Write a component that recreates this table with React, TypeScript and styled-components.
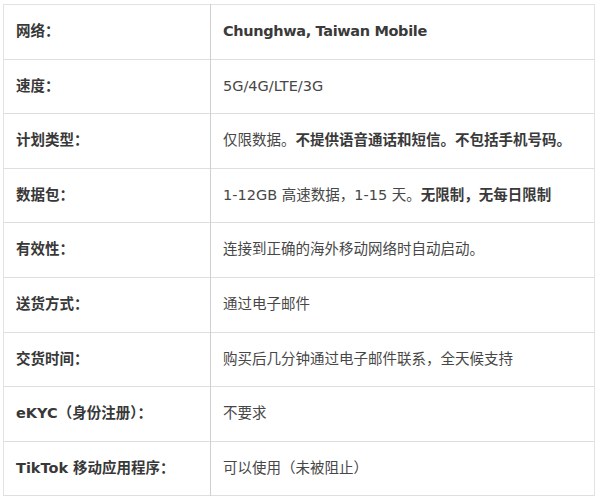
import React from "react";
import styled, { createGlobalStyle } from "styled-components";

const Global = createGlobalStyle`
  html, body { margin: 0; padding: 0; background: #fff; }
  body { font-family: "DejaVu Sans", "Noto Sans CJK SC", sans-serif; }
`;

const Wrap = styled.div`
  padding: 4px 5px 0 3px;
`;

const Table = styled.table`
  width: 592px;
  border-collapse: collapse;
  border: 1px solid #e2e2e2;
`;

const Row = styled.tr`
  border-bottom: 1px solid #dedede;
`;

const Label = styled.td`
  width: 182px;
  padding: 16px 12px;
  line-height: 21.6px;
  font-size: 14.5px;
  font-weight: 700;
  color: #383838;
  border-right: 1px solid #cfcfcf;
  vertical-align: middle;
`;

const Value = styled.td<{ $bold?: boolean }>`
  padding: 16px 12px;
  line-height: 21.6px;
  font-size: 14.5px;
  font-weight: ${(p) => (p.$bold ? 700 : 400)};
  letter-spacing: ${(p) => (p.$bold ? "-0.35px" : "0")};
  color: ${(p) => (p.$bold ? "#3a3a3a" : "#474747")};
  vertical-align: middle;
`;

const Strong = styled.strong`
  font-weight: 700;
  color: #3a3a3a;
`;

export default function App() {
  return (
    <>
      <Global />
      <Wrap>
        <Table>
          <tbody>
            <Row>
              <Label>网络：</Label>
              <Value $bold>Chunghwa, Taiwan Mobile</Value>
            </Row>
            <Row>
              <Label>速度：</Label>
              <Value>5G/4G/LTE/3G</Value>
            </Row>
            <Row>
              <Label>计划类型：</Label>
              <Value>
                仅限数据。<Strong>不提供语音通话和短信。不包括手机号码。</Strong>
              </Value>
            </Row>
            <Row>
              <Label>数据包：</Label>
              <Value>
                1-12GB 高速数据，1-15 天。<Strong>无限制，无每日限制</Strong>
              </Value>
            </Row>
            <Row>
              <Label>有效性：</Label>
              <Value>连接到正确的海外移动网络时自动启动。</Value>
            </Row>
            <Row>
              <Label>送货方式：</Label>
              <Value>通过电子邮件</Value>
            </Row>
            <Row>
              <Label>交货时间：</Label>
              <Value>购买后几分钟通过电子邮件联系，全天候支持</Value>
            </Row>
            <Row>
              <Label>eKYC（身份注册）：</Label>
              <Value>不要求</Value>
            </Row>
            <Row>
              <Label>TikTok 移动应用程序：</Label>
              <Value>可以使用（未被阻止）</Value>
            </Row>
          </tbody>
        </Table>
      </Wrap>
    </>
  );
}
